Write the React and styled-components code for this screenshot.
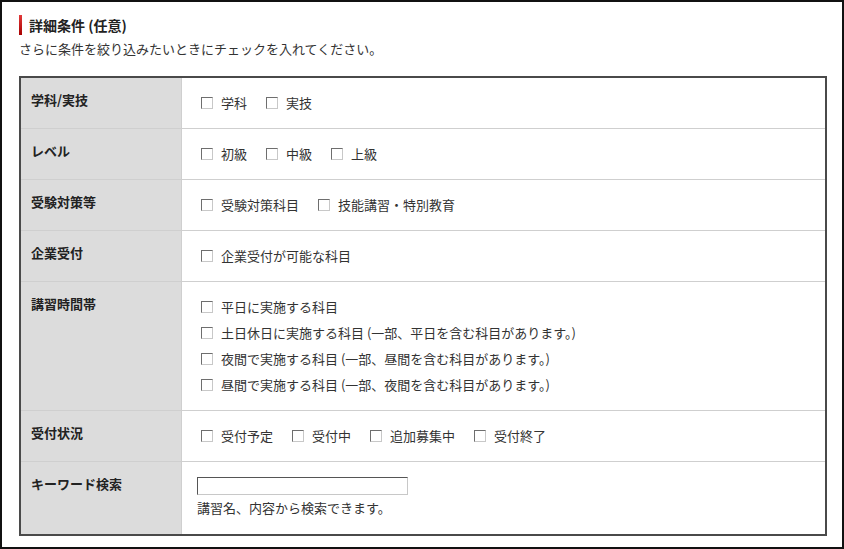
import React from 'react';
import styled, { createGlobalStyle } from 'styled-components';

const GlobalStyle = createGlobalStyle`
    html, body {
        margin: 0;
        padding: 0;
        background: #fff;
    }
    body {
        font-family: "Noto Sans CJK JP", "Noto Sans", sans-serif;
        color: #222;
    }
`

const Frame = styled.div`
    box-sizing: border-box;
    width: 844px;
    height: 549px;
    border: 2px solid #111;
    padding: 13px 15px 0 17px;
    background: #fff;
`
const Heading = styled.h2`
    display: flex;
    align-items: center;
    gap: 7px;
    margin: 0;
    height: 20px;
    font-size: 14px;
    font-weight: bold;
    line-height: 20px;
    color: #222;
    &::before {
        content: "";
        width: 3px;
        height: 20px;
        background: linear-gradient(#e23a3a, #a80000);
    }
`
const Lead = styled.p`
    margin: 5px 0 0;
    font-size: 13px;
    line-height: 18px;
    color: #333;
`
const Table = styled.div`
    margin-top: 18px;
    border: 2px solid #4a4a4a;
`
const Row = styled.div`
    display: grid;
    grid-template-columns: 161px 1fr;
    border-bottom: 1px solid #cfcfcf;
    &:last-child {
        border-bottom: none;
    }
`
const Label = styled.div`
    box-sizing: border-box;
    background: #dcdcdc;
    border-right: 1px solid #cfcfcf;
    padding: 12px 10px;
    font-size: 13px;
    font-weight: bold;
    line-height: 20px;
    color: #222;
`
const Cell = styled.div`
    padding: 12px 15px ${p => (p.$tall ? '13px' : '12px')};
    font-size: 13px;
    color: #333;
    display: flex;
    flex-direction: ${p => (p.$stack ? 'column' : 'row')};
    align-items: flex-start;
`
const Item = styled.label`
    display: flex;
    align-items: center;
    height: 26px;
    line-height: 26px;
    margin-right: ${p => (p.$stack ? '0' : '15px')};
    white-space: nowrap;
`
const Box = styled.input.attrs({ type: 'checkbox' })`
    appearance: none;
    box-sizing: border-box;
    width: 12px;
    height: 12px;
    margin: 0 8px 0 4px;
    border: 1px solid;
    border-color: #6e6e6e #c8c8c8 #c8c8c8 #6e6e6e;
    background: #fff;
`
const Search = styled.input`
    box-sizing: border-box;
    width: 211px;
    height: 18px;
    margin: 3px 0 0;
    padding: 0 3px;
    border: 1px solid;
    border-color: #555 #c8c8c8 #c8c8c8 #555;
    outline: none;
`
const Note = styled.div`
    line-height: 26px;
`

const rows = [
    { label: '学科/実技', items: ['学科', '実技'] },
    { label: 'レベル', items: ['初級', '中級', '上級'] },
    { label: '受験対策等', items: ['受験対策科目', '技能講習・特別教育'] },
    { label: '企業受付', items: ['企業受付が可能な科目'] },
    {
        label: '講習時間帯',
        stack: true,
        items: [
            '平日に実施する科目',
            '土日休日に実施する科目 (一部、平日を含む科目があります。)',
            '夜間で実施する科目 (一部、昼間を含む科目があります。)',
            '昼間で実施する科目 (一部、夜間を含む科目があります。)',
        ],
    },
    { label: '受付状況', items: ['受付予定', '受付中', '追加募集中', '受付終了'] },
]

const App = () => {
    return (
        <Frame>
            <GlobalStyle />
            <Heading>詳細条件 (任意)</Heading>
            <Lead>さらに条件を絞り込みたいときにチェックを入れてください。</Lead>
            <Table>
                {rows.map(row => (
                    <Row key={row.label}>
                        <Label>{row.label}</Label>
                        <Cell $stack={row.stack}>
                            {row.items.map(text => (
                                <Item key={text} $stack={row.stack}>
                                    <Box />
                                    {text}
                                </Item>
                            ))}
                        </Cell>
                    </Row>
                ))}
                <Row>
                    <Label>キーワード検索</Label>
                    <Cell $stack $tall>
                        <Search type="text" />
                        <Note>講習名、内容から検索できます。</Note>
                    </Cell>
                </Row>
            </Table>
        </Frame>
    )
}
export default App;
